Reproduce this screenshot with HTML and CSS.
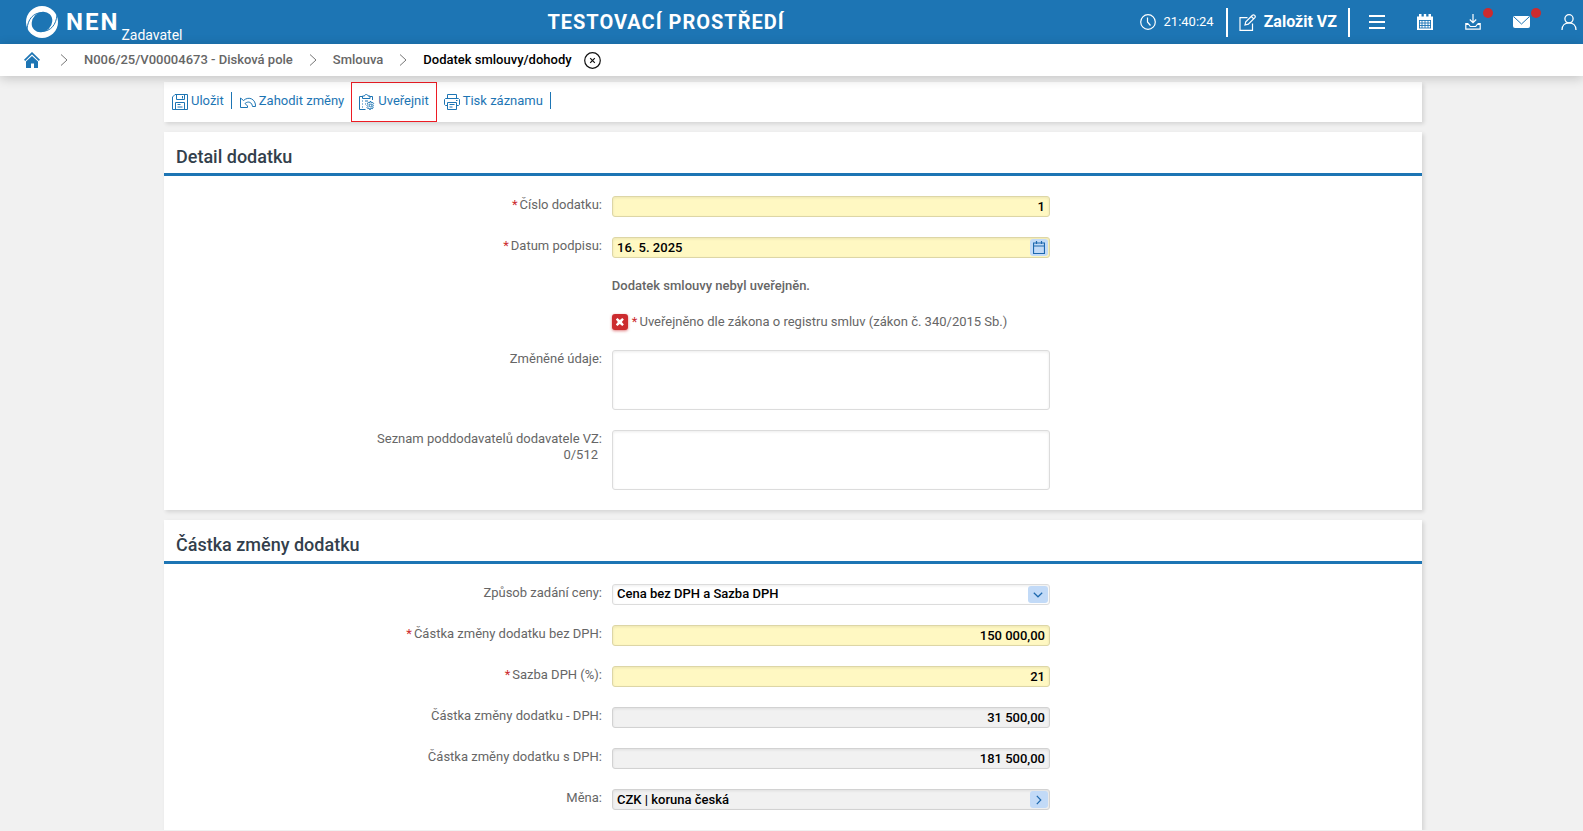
FILE: index.html
```html
<!DOCTYPE html>
<html lang="cs">
<head>
  <meta charset="UTF-8" />
  <title>NEN - Dodatek smlouvy/dohody</title>
  <link rel="stylesheet" href="styles.css">
</head>
<body>
  <header class="top-bar">
    <a class="brand" href="#">
      <svg class="brand-logo" width="34" height="34" viewBox="0 0 34 34">
        <circle cx="17" cy="17" r="16" fill="#fff"/>
        <ellipse cx="17" cy="17" rx="11" ry="9.600" transform="rotate(-45 17 17)" fill="#1d75b4"/>
        <path d="M2 24C3 14 8 8 17 7.500M32 10C31 20 26 26 17 26.500" fill="none" stroke="#1d75b4" stroke-width="1"/>
      </svg>
      <span class="brand-name">NEN</span>
      <span class="brand-role">Zadavatel</span>
    </a>
    <div class="env-title">TESTOVACÍ PROSTŘEDÍ</div>
    <div class="tools">
      <div class="clock">
        <svg width="16" height="16" viewBox="0 0 16 16" fill="none" stroke="#fff" stroke-width="1.200"><circle cx="8" cy="8" r="7.300"/><path d="M7.500 3.500v4.500l3 3.500"/></svg>
        <span>21:40:24</span>
      </div>
      <button class="create-btn" type="button">
        <svg width="17" height="17" viewBox="0 0 17 17" fill="none" stroke="#fff" stroke-width="1.200"><path d="M8.500 3.600H1v12.800h12.500V9.500M6 11l.8-3.300 6.600-6.500c1.500-1.200 3.700.8 2.500 2.400L9.300 10.200zM12.300 2.500l2.400 2.400"/></svg>
        <span>Založit VZ</span>
      </button>
      <button class="icon-btn" type="button" aria-label="Menu">
        <svg width="16" height="16" viewBox="0 0 16 16" fill="none" stroke="#fff" stroke-width="2"><path d="M0 2h16M0 8h16M0 14h16"/></svg>
      </button>
      <button class="icon-btn" type="button" aria-label="Kalendář">
        <svg width="16" height="16" viewBox="0 0 16 16"><path fill="#fff" d="M0 2.500h2V0h2.500v2.500h2.300V0h2.400v2.500h2.300V0H14v2.500h2V16H0z"/><path fill="none" stroke="#1d75b4" d="M2 6.500h12M2 14h12M2.500 6v8M13.500 6v8M2 9h12M2 11.500h12M5 6v8M8 6v8M11 6v8" stroke-width=".9"/></svg>
      </button>
      <button class="icon-btn" type="button" aria-label="Stažené soubory">
        <svg width="16" height="16" viewBox="0 0 16 16" fill="none" stroke="#fff" stroke-width="1.200"><path d="M8 0v8.500M4.800 5.500 8 8.700l3.200-3.200"/><path d="M3.500 9.500H.8v5.700h14.400V9.500h-2.700M.8 10.500h3l1.500 2h5.400l1.500-2h3"/></svg>
        <span class="dot"></span>
      </button>
      <button class="icon-btn" type="button" aria-label="Zprávy">
        <svg width="17" height="16" viewBox="0 0 17 16"><rect y="2" width="17" height="12" rx="2" fill="#fff"/><path d="m1 3 7.500 7L16 3" fill="none" stroke="#1d75b4" stroke-width="1"/></svg>
        <span class="dot"></span>
      </button>
      <button class="icon-btn" type="button" aria-label="Uživatel">
        <svg width="16" height="16" viewBox="0 0 16 16" fill="none" stroke="#fff" stroke-width="1.300"><circle cx="8" cy="4.800" r="4.100"/><path d="M1 16c0-4.500 3-7.100 7-7.100s7 2.600 7 7.100"/></svg>
      </button>
    </div>
  </header>

  <nav class="breadcrumb" aria-label="Drobečková navigace">
    <a class="home" href="#" aria-label="Domů">
      <svg width="16" height="16" viewBox="0 0 16 16"><path fill="none" stroke="#1d75b4" stroke-width="1.800" d="M.6 8.300 8 1.200l7.400 7.100"/><path fill="#1d75b4" d="M8 3.900 14 9.600V16h-4v-4.500H7V16H2V9.600z"/></svg>
    </a>
    <svg class="sep" width="8" height="12" viewBox="0 0 8 12"><path d="m1 .5 6 5.500-6 5.500"/></svg>
    <a href="#">N006/25/V00004673 - Disková pole</a>
    <svg class="sep" width="8" height="12" viewBox="0 0 8 12"><path d="m1 .5 6 5.500-6 5.500"/></svg>
    <a href="#">Smlouva</a>
    <svg class="sep" width="8" height="12" viewBox="0 0 8 12"><path d="m1 .5 6 5.500-6 5.500"/></svg>
    <a class="current" href="#">Dodatek smlouvy/dohody</a>
    <button class="close-btn" type="button" aria-label="Zavřít">
      <svg width="17" height="17" viewBox="0 0 17 17" fill="none" stroke="#111" stroke-width="1.200"><circle cx="8.500" cy="8.500" r="7.800"/><path d="m6.200 6.200 4.600 4.600M10.800 6.200l-4.600 4.600"/></svg>
    </button>
  </nav>

  <main>
    <div class="toolbar">
      <button class="tool-btn divided" type="button">
        <svg width="16" height="16" viewBox="0 0 16 16"><path d="M3 .5h12.500v15H.5V3zM4.500.5v5h8v-5M10.500 2v2.500M3.500 15.500v-7h9v7M5.500 10.500h3M5.500 13h5"/></svg>
        <span>Uložit</span>
      </button>
      <button class="tool-btn" type="button">
        <svg width="16" height="16" viewBox="0 0 16 16"><path d="M.5 4v9.500h7V12L5 9.500C8.500 6.500 12 8.500 12.500 12.500h3C16 5.500 9 1.500 3.500 6.500L.5 4"/></svg>
        <span>Zahodit změny</span>
      </button>
      <button class="tool-btn marked" type="button">
        <svg width="16" height="16" viewBox="0 0 16 16"><path d="M6.500 15.500h-6v-13h3M10.500 2.500h3V6M3.500 4.500V2h2C5.500 0 9 0 9 2h2v2.500H3.500M3 7h1M6 7h3M3 10h1M3 13h1M6 10h1"/><circle cx="11.500" cy="11.500" r="1.300"/><path d="m11 7.500 1 0 .4 1.500 1.500-.5.700 1-1 1.200.8 1-.8 1 .6 1.200-1 .8-1.200-.8-.5 1.600h-1L10 14l-1.300.5-.7-1 .9-1.100L8 11.500l.9-1L8.300 9.300l.9-.8 1.300.5z"/></svg>
        <span>Uveřejnit</span>
      </button>
      <button class="tool-btn divided" type="button">
        <svg width="16" height="16" viewBox="0 0 16 16"><path d="M3.500 4.500v-4h9v4M3.500 11.500h-2l-1-1v-5l1-1h13l1 1v5l-1 1h-2M3.500 8.500h9v7h-9zM5.500 10.500h5M5.500 13h3M12 6.500h1.500"/></svg>
        <span>Tisk záznamu</span>
      </button>
    </div>

    <section class="card">
      <h2>Detail dodatku</h2>
      <div class="form">
        <div class="row">
          <label for="cislo"><span class="req">*</span>Číslo dodatku:</label>
          <input class="field required number" type="text" id="cislo" value="1" />
        </div>
        <div class="row">
          <label for="datum"><span class="req">*</span>Datum podpisu:</label>
          <div class="field-wrap">
            <input class="field required" type="text" id="datum" value="16. 5. 2025" />
            <button class="field-btn" type="button" aria-label="Vybrat datum">
              <svg width="12" height="13" viewBox="0 0 12 13"><path d="M.5 2h11v10.500H.5zM.5 5h11M3.500 0v3M8.500 0v3"/></svg>
            </button>
          </div>
        </div>
        <p class="note">Dodatek smlouvy nebyl uveřejněn.</p>
        <div class="check-row">
          <input class="check" type="checkbox" id="registr" />
          <label for="registr"><span class="req">*</span>Uveřejněno dle zákona o registru smluv (zákon č. 340/2015 Sb.)</label>
        </div>
        <div class="row">
          <label for="udaje">Změněné údaje:</label>
          <textarea class="field area" id="udaje"></textarea>
        </div>
        <div class="row">
          <label for="seznam">Seznam poddodavatelů dodavatele VZ:<span class="counter">0/512</span></label>
          <textarea class="field area" id="seznam" maxlength="512"></textarea>
        </div>
      </div>
    </section>

    <section class="card">
      <h2>Částka změny dodatku</h2>
      <div class="form">
        <div class="row">
          <label for="zpusob">Způsob zadání ceny:</label>
          <div class="field-wrap">
            <select class="field" id="zpusob">
              <option>Cena bez DPH a Sazba DPH</option>
            </select>
            <span class="field-btn select-arrow">
              <svg width="10" height="6" viewBox="0 0 10 6"><path d="M.8.800 5 4.800 9.200.800"/></svg>
            </span>
          </div>
        </div>
        <div class="row">
          <label for="bez-dph"><span class="req">*</span>Částka změny dodatku bez DPH:</label>
          <input class="field required number" type="text" id="bez-dph" value="150 000,00" />
        </div>
        <div class="row">
          <label for="sazba"><span class="req">*</span>Sazba DPH (%):</label>
          <input class="field required number" type="text" id="sazba" value="21" />
        </div>
        <div class="row">
          <label for="dph">Částka změny dodatku - DPH:</label>
          <input class="field number" type="text" id="dph" value="31 500,00" readonly />
        </div>
        <div class="row">
          <label for="s-dph">Částka změny dodatku s DPH:</label>
          <input class="field number" type="text" id="s-dph" value="181 500,00" readonly />
        </div>
        <div class="row">
          <label for="mena">Měna:</label>
          <div class="field-wrap">
            <input class="field" type="text" id="mena" value="CZK | koruna česká" readonly />
            <button class="field-btn" type="button" aria-label="Detail měny">
              <svg width="6" height="10" viewBox="0 0 6 10"><path d="M.8.800 4.800 5 .8 9.200"/></svg>
            </button>
          </div>
        </div>
      </div>
    </section>
  </main>
</body>
</html>
```
FILE: styles.css
```css
* {
  margin: 0;
  padding: 0;
  box-sizing: border-box;
}

body {
  background-color: #f1f1f1;
  color: #666666;
  font-family: Roboto, "Liberation Sans", sans-serif;
  font-size: 13px;
  line-height: 16px;
}

a {
  color: inherit;
  text-decoration: none;
}

button {
  border: none;
  background: none;
  color: inherit;
  font: inherit;
  cursor: pointer;
}

svg {
  display: block;
  flex-shrink: 0;
}

/* Blue top bar */
.top-bar {
  display: flex;
  align-items: center;
  height: 44px;
  padding: 0 6px 0 25px;
  background-color: #1d75b4;
  color: #ffffff;
}

.brand {
  display: flex;
  align-items: center;
  height: 44px;
}

.brand-name {
  margin-left: 7px;
  font-size: 24px;
  font-weight: 700;
  letter-spacing: 2px;
}

.brand-role {
  align-self: flex-end;
  margin-left: 2px;
  padding-bottom: 1px;
  font-size: 14px;
}

.env-title {
  flex: 1;
  padding-left: 10px;
  font-size: 20px;
  font-weight: 700;
  letter-spacing: 1px;
  text-align: center;
}

.tools {
  display: flex;
  align-items: center;
}

.clock {
  display: flex;
  align-items: center;
  gap: 8px;
  margin-right: 12px;
}

.create-btn {
  display: flex;
  align-items: center;
  gap: 8px;
  height: 29px;
  margin-right: 11px;
  padding: 0 11px;
  border-left: 2px solid #ffffff;
  border-right: 2px solid #ffffff;
  font-size: 16px;
  font-weight: 700;
}

.icon-btn {
  position: relative;
  display: flex;
  justify-content: center;
  width: 32px;
  margin-left: 16px;
}
.create-btn + .icon-btn {
  margin-left: 0;
}
.icon-btn:last-child {
  width: 17px;
  margin-left: 23px;
}

.dot {
  position: absolute;
  top: -6px;
  right: -4px;
  width: 10px;
  height: 10px;
  border-radius: 50%;
  background-color: #cc2b2e;
}

/* Breadcrumb */
.breadcrumb {
  position: relative;
  display: flex;
  align-items: center;
  gap: 16px;
  height: 32px;
  padding: 0 24px;
  background-color: #ffffff;
  box-shadow: 0 2px 12px rgba(0, 0, 0, 0.2);
  font-weight: 500;
}

.home {
  margin-right: 4px;
}

.sep {
  fill: none;
  stroke: #777777;
}

.current {
  color: #000000;
}

.close-btn {
  margin-left: -4px;
}

/* Page content */
main {
  display: grid;
  gap: 10px;
  margin: 6px 161px 0 164px;
}

.toolbar,
.card {
  background-color: #ffffff;
  box-shadow: 2px 2px 4px rgba(0, 0, 0, 0.12);
}

.toolbar {
  display: flex;
  height: 40px;
  padding-left: 1px;
}

.tool-btn {
  display: flex;
  align-items: center;
  gap: 3px;
  padding: 0 7px;
  color: #1d75b4;
}
.tool-btn svg {
  fill: none;
  stroke: #1d75b4;
}
.tool-btn span {
  padding-bottom: 3px;
}
.tool-btn.divided::after {
  content: "";
  width: 1px;
  height: 17px;
  margin: 0 -7px 3px 4px;
  background-color: #1d75b4;
}
.tool-btn.divided + .tool-btn {
  margin-left: 1px;
}
.tool-btn.marked {
  border: 1px solid #ed1c24;
}

.card h2 {
  height: 44px;
  padding: 15px 12px 0;
  border-bottom: 3px solid #1d75b4;
  color: #333f4c;
  font-size: 18px;
  font-weight: 500;
  line-height: 20px;
}

/* Form rows: label, field, free space */
.form {
  display: grid;
  gap: 20px;
  padding: 20px 0;
}

.row {
  display: grid;
  grid-template-columns: 448fr 438fr 372fr;
}

.row > label {
  padding: 1px 10px 0 0;
  text-align: right;
}

.req {
  margin-right: 2px;
  color: #cc2b2e;
}

.counter {
  display: block;
  padding-right: 4px;
}

.note {
  padding-left: 35.6%;
  font-weight: 500;
}

.check-row {
  display: flex;
  align-items: center;
  gap: 4px;
  padding-left: 35.6%;
}

.check {
  display: grid;
  place-items: center;
  width: 16px;
  height: 16px;
  border-radius: 3px;
  background-color: #cc2b2e;
  box-shadow: 0 1px 3px rgba(204, 43, 46, 0.6);
  appearance: none;
}
.check::before {
  content: "";
  width: 8px;
  height: 8px;
  background-color: #ffffff;
  clip-path: polygon(0 20%, 20% 0, 50% 25%, 80% 0, 100% 20%, 75% 50%, 100% 80%, 80% 100%, 50% 75%, 20% 100%, 0 80%, 25% 50%);
}

.field-wrap {
  position: relative;
}

.field {
  display: block;
  width: 100%;
  height: 21px;
  padding: 0 4px;
  border: 1px solid #dcdcdc;
  border-radius: 3px;
  background-color: #ffffff;
  box-shadow: inset 0 1px 3px rgba(0, 0, 0, 0.08);
  color: #000000;
  font: inherit;
  font-weight: 500;
  outline: none;
  appearance: none;
}
.field.required {
  border-color: #ddd6a6;
  background-color: #fff8c2;
}
.field[readonly] {
  border-color: #d2d2d2;
  background-color: #f1f1f1;
}
.field.number {
  text-align: right;
}
.field.area {
  height: 60px;
  resize: none;
}
select.field {
  padding-bottom: 2px;
}

/* Small blue buttons over the right end of a field */
.field-btn {
  position: absolute;
  top: 2px;
  right: 2px;
  display: grid;
  place-items: center;
  width: 18px;
  height: 17px;
  border-radius: 3px;
  background-color: #c2daf7;
}
.field-btn svg {
  fill: none;
  stroke: #1d68ae;
  stroke-width: 1.2;
}
.select-arrow {
  width: 20px;
  pointer-events: none;
}
```
